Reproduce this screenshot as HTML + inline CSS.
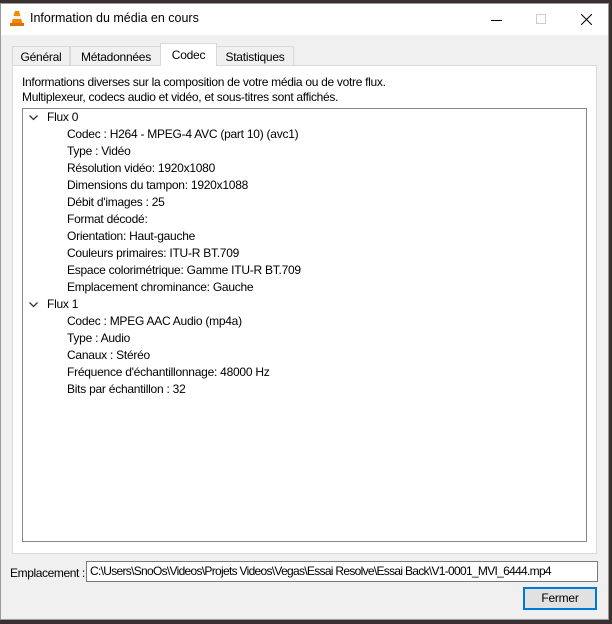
<!DOCTYPE html>
<html><head><meta charset="utf-8"><style>
*{margin:0;padding:0;box-sizing:border-box}
body{width:612px;height:624px;overflow:hidden;background:#3a3030;font-family:"Liberation Sans",sans-serif;font-size:12px;color:#000;position:relative;letter-spacing:-0.25px}
.win{position:absolute;left:0;top:3px;width:609px;height:617px;background:#f0f0f0;border:1px solid #999}
.title{position:absolute;left:0;top:0;width:100%;height:31px;background:#fff}
.abs{position:absolute;white-space:nowrap}
.tab{position:absolute;top:42px;height:20px;border:1px solid #d9d9d9;border-bottom:none;background:#f0f0f0;text-align:center;line-height:20px}
.pane{position:absolute;left:11px;top:61px;width:585px;height:489px;background:#fff;border:1px solid #d9d9d9}
.tree{position:absolute;left:21px;top:104px;width:565px;height:434px;border:1px solid #828790;background:#fff}
.row{position:absolute;line-height:17px;white-space:nowrap}
</style></head><body>
<div class="win">
 <div class="title">
  <svg class="abs" style="left:8px;top:6px" width="16" height="17" viewBox="0 0 16 17"><path d="M6 1h4l1.5 5h-7z" fill="#f08a00"/><path d="M4.5 6h7l0.8 3h-8.6z" fill="#eee"/><path d="M3.7 9h8.6l1 4h-10.6z" fill="#f08a00"/><path d="M1 13h14v3H1z" fill="#e07000"/></svg>
  <div class="abs" style="left:29px;top:7px;font-size:12.5px;letter-spacing:0">Information du média en cours</div>
  <div class="abs" style="left:490px;top:16px;width:11px;height:1px;background:#000"></div>
  <div class="abs" style="left:535px;top:10px;width:10px;height:10px;border:1px solid #ccc"></div>
  <svg class="abs" style="left:580px;top:10px" width="11" height="11"><path d="M0 0L11 11M11 0L0 11" stroke="#000" stroke-width="1"/></svg>
 </div>
 <div class="tab" style="left:11px;width:58px">Général</div>
 <div class="tab" style="left:69px;width:92px">Métadonnées</div>
 <div class="tab" style="left:215px;width:78px">Statistiques</div>
 <div class="pane"></div>
 <div class="tab" style="left:159px;width:57px;top:39px;height:23px;background:#fff;line-height:22px;z-index:2">Codec</div>
 <div class="abs" style="left:21px;top:71px;line-height:15px;letter-spacing:-0.3px">Informations diverses sur la composition de votre média ou de votre flux.<br>Multiplexeur, codecs audio et vidéo, et sous-titres sont affichés.</div>
 <div class="tree">
  <svg class="abs" style="left:6px;top:6px" width="9" height="6"><path d="M0.5 0.5L4.5 4.5L8.5 0.5" stroke="#333" fill="none" stroke-width="1.3"/></svg>
  <div class="row" style="left:24px;top:0px">Flux 0</div>
  <div class="row" style="left:44px;top:17px">Codec : H264 - MPEG-4 AVC (part 10) (avc1)</div>
  <div class="row" style="left:44px;top:34px">Type : Vidéo</div>
  <div class="row" style="left:44px;top:51px">Résolution vidéo: 1920x1080</div>
  <div class="row" style="left:44px;top:68px">Dimensions du tampon: 1920x1088</div>
  <div class="row" style="left:44px;top:85px">Débit d'images : 25</div>
  <div class="row" style="left:44px;top:102px">Format décodé:</div>
  <div class="row" style="left:44px;top:119px">Orientation: Haut-gauche</div>
  <div class="row" style="left:44px;top:136px">Couleurs primaires: ITU-R BT.709</div>
  <div class="row" style="left:44px;top:153px">Espace colorimétrique: Gamme ITU-R BT.709</div>
  <div class="row" style="left:44px;top:170px">Emplacement chrominance: Gauche</div>
  <svg class="abs" style="left:6px;top:193px" width="9" height="6"><path d="M0.5 0.5L4.5 4.5L8.5 0.5" stroke="#333" fill="none" stroke-width="1.3"/></svg>
  <div class="row" style="left:24px;top:187px">Flux 1</div>
  <div class="row" style="left:44px;top:204px">Codec : MPEG AAC Audio (mp4a)</div>
  <div class="row" style="left:44px;top:221px">Type : Audio</div>
  <div class="row" style="left:44px;top:238px">Canaux : Stéréo</div>
  <div class="row" style="left:44px;top:255px">Fréquence d'échantillonnage: 48000 Hz</div>
  <div class="row" style="left:44px;top:272px">Bits par échantillon : 32</div>
 </div>
 <div class="abs" style="left:9px;top:562px;letter-spacing:-0.4px">Emplacement :</div>
 <div class="abs" style="left:85px;top:557px;width:512px;height:21px;border:1px solid #7a7a7a;background:#fff;padding-left:3px;line-height:19px;letter-spacing:-0.7px;overflow:hidden">C:\Users\SnoOs\Videos\Projets Videos\Vegas\Essai Resolve\Essai Back\V1-0001_MVI_6444.mp4</div>
 <div class="abs" style="left:522px;top:583px;width:74px;height:23px;border:2px solid #0078d7;background:#e1e1e1;text-align:center;line-height:19px">Fermer</div>
</div>
</body></html>
